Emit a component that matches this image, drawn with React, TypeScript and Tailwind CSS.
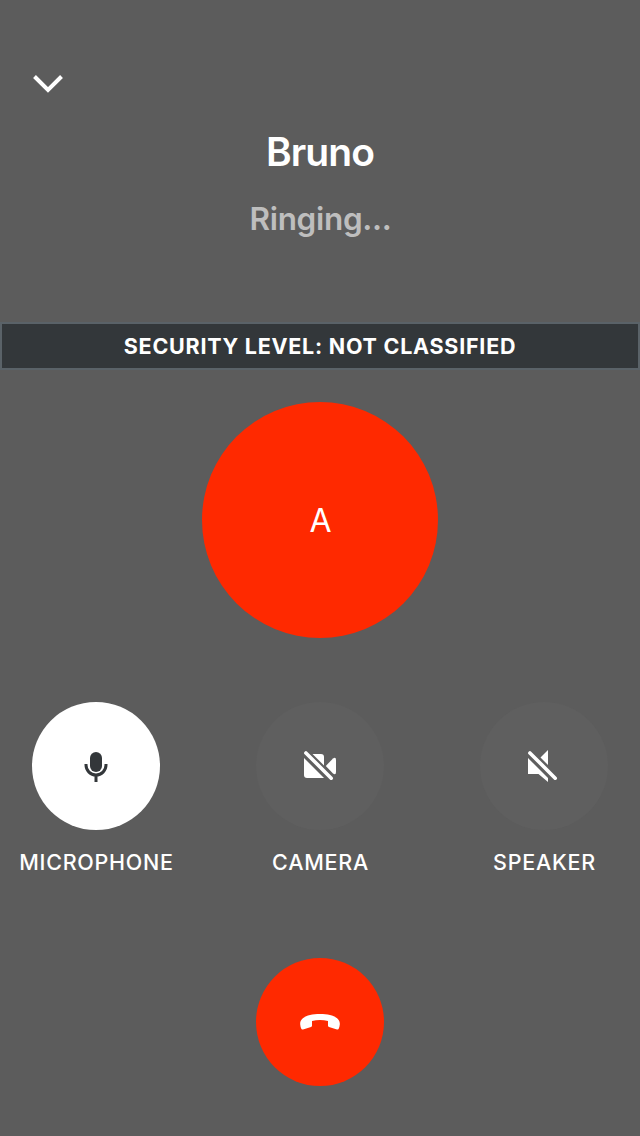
import type { ReactNode } from 'react';

function Icon({ children }: { children: ReactNode }) {
  return (
    <svg width="60" height="60" viewBox="0 0 60 60" fill="none" aria-hidden="true">
      {children}
    </svg>
  );
}

function MicIcon() {
  return (
    <Icon>
      <rect x="24" y="16" width="12" height="20" rx="6" fill="#33373a" />
      <path d="M20 28v1a10 10 0 0 0 20 0v-1M30 39v7" stroke="#33373a" strokeWidth="3" />
    </Icon>
  );
}

function CameraOffIcon() {
  return (
    <Icon>
      <path d="M14 22L34 42H17a3 3 0 0 1-3-3Z" fill="#fff" />
      <path d="M22.5 18H31a3 3 0 0 1 3 3v8.5Z" fill="#fff" />
      <path d="M35.8 30L43 22.4q3-1.8 3 1.6v12q0 3.4-3 1.6Z" fill="#fff" />
      <path d="M15.9 16.9L41.2 42.2" stroke="#fff" strokeWidth="3.6" strokeLinecap="round" />
    </Icon>
  );
}

function SpeakerOffIcon() {
  return (
    <Icon>
      <path d="M14 22L34 42v4l-9.5-8H14Z" fill="#fff" />
      <path d="M26.5 21.5L34 14v15Z" fill="#fff" />
      <path d="M15.9 16.9L41.2 42.2" stroke="#fff" strokeWidth="3.6" strokeLinecap="round" />
    </Icon>
  );
}

function HangUpIcon() {
  return (
    <Icon>
      <path
        d="M10.2 32.5C9.6 25.5 18 22 30 22s20.4 3.5 19.8 10.5q-.2 2.2-1 4.1-.5 1.2-1.8.8L39 35q-1-.3-1-1.4V29q-8-2-16 0v4.6q0 1.1-1 1.4l-8 2.4q-1.3.4-1.8-.8-.8-1.9-1-4.1Z"
        fill="#fff"
      />
    </Icon>
  );
}

function Control({ label, active, children }: { label: string; active?: boolean; children: ReactNode }) {
  return (
    <div className="flex w-48 flex-col items-center">
      <button
        aria-label={label}
        className={`flex h-32 w-32 items-center justify-center rounded-full ${active ? 'bg-white' : 'bg-[#5f5f5f]'}`}
      >
        {children}
      </button>
      <span className="mt-[18px] pl-px text-[21.5px] leading-7 font-medium tracking-[0.75px] whitespace-nowrap text-white">
        {label}
      </span>
    </div>
  );
}

export default function App() {
  return (
    <main className="flex h-[1136px] w-[640px] flex-col bg-[#5c5c5c] font-['Inter',sans-serif] text-white">
      <header className="flex h-[322px] flex-col pt-[60px]">
        <button aria-label="Minimize" className="ml-5 flex h-[50px] w-[60px]">
          <svg width="60" height="50" viewBox="0 0 60 50" fill="none">
            <path d="M14.5 16.5L28 30L41.5 16.5" stroke="#fff" strokeWidth="4" />
          </svg>
        </button>
        <h1 className="mt-[18px] text-center text-[39px] leading-[48px] font-semibold tracking-[-0.9px]">Bruno</h1>
        <p className="mt-[23px] pl-px text-center text-[31.5px] leading-10 font-semibold tracking-[-0.3px] text-[#bebebe]">
          Ringing...
        </p>
      </header>
      <div className="flex h-12 items-center justify-center border-2 border-[#5a6268] bg-[#33373a] text-[21.5px] leading-7 font-bold tracking-[0.75px]">
        SECURITY LEVEL: NOT CLASSIFIED
      </div>
      <div className="mt-8 flex h-[236px] w-[236px] items-center justify-center self-center rounded-full bg-[#ff2900] pt-0.5 pl-px text-[32px] leading-10">
        A
      </div>
      <div className="mt-16 flex justify-between">
        <Control label="MICROPHONE" active>
          <MicIcon />
        </Control>
        <Control label="CAMERA">
          <CameraOffIcon />
        </Control>
        <Control label="SPEAKER">
          <SpeakerOffIcon />
        </Control>
      </div>
      <button
        aria-label="Hang up"
        className="mt-[82px] flex h-32 w-32 items-center justify-center self-center rounded-full bg-[#ff2900]"
      >
        <HangUpIcon />
      </button>
    </main>
  );
}
